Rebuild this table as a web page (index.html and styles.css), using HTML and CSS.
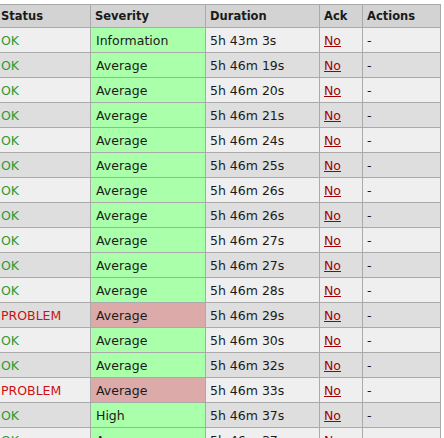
FILE: index.html
```html
<!DOCTYPE html>
<html>
<head>
<meta charset="utf-8">
<link rel="stylesheet" href="styles.css">
</head>
<body>
<div class="events">
  <div class="hd">Status</div><div class="hd">Severity</div><div class="hd">Duration</div><div class="hd">Ack</div><div class="hd">Actions</div>

  <div class="c odd ok">OK</div><div class="c sev-ok">Information</div><div class="c odd">5h 43m 3s</div><div class="c odd"><a class="ack">No</a></div><div class="c odd">-</div>
  <div class="c even ok">OK</div><div class="c sev-ok">Average</div><div class="c even">5h 46m 19s</div><div class="c even"><a class="ack">No</a></div><div class="c even">-</div>
  <div class="c odd ok">OK</div><div class="c sev-ok">Average</div><div class="c odd">5h 46m 20s</div><div class="c odd"><a class="ack">No</a></div><div class="c odd">-</div>
  <div class="c even ok">OK</div><div class="c sev-ok">Average</div><div class="c even">5h 46m 21s</div><div class="c even"><a class="ack">No</a></div><div class="c even">-</div>
  <div class="c odd ok">OK</div><div class="c sev-ok">Average</div><div class="c odd">5h 46m 24s</div><div class="c odd"><a class="ack">No</a></div><div class="c odd">-</div>
  <div class="c even ok">OK</div><div class="c sev-ok">Average</div><div class="c even">5h 46m 25s</div><div class="c even"><a class="ack">No</a></div><div class="c even">-</div>
  <div class="c odd ok">OK</div><div class="c sev-ok">Average</div><div class="c odd">5h 46m 26s</div><div class="c odd"><a class="ack">No</a></div><div class="c odd">-</div>
  <div class="c even ok">OK</div><div class="c sev-ok">Average</div><div class="c even">5h 46m 26s</div><div class="c even"><a class="ack">No</a></div><div class="c even">-</div>
  <div class="c odd ok">OK</div><div class="c sev-ok">Average</div><div class="c odd">5h 46m 27s</div><div class="c odd"><a class="ack">No</a></div><div class="c odd">-</div>
  <div class="c even ok">OK</div><div class="c sev-ok">Average</div><div class="c even">5h 46m 27s</div><div class="c even"><a class="ack">No</a></div><div class="c even">-</div>
  <div class="c odd ok">OK</div><div class="c sev-ok">Average</div><div class="c odd">5h 46m 28s</div><div class="c odd"><a class="ack">No</a></div><div class="c odd">-</div>
  <div class="c even problem">PROBLEM</div><div class="c sev-problem">Average</div><div class="c even">5h 46m 29s</div><div class="c even"><a class="ack">No</a></div><div class="c even">-</div>
  <div class="c odd ok">OK</div><div class="c sev-ok">Average</div><div class="c odd">5h 46m 30s</div><div class="c odd"><a class="ack">No</a></div><div class="c odd">-</div>
  <div class="c even ok">OK</div><div class="c sev-ok">Average</div><div class="c even">5h 46m 32s</div><div class="c even"><a class="ack">No</a></div><div class="c even">-</div>
  <div class="c odd problem">PROBLEM</div><div class="c sev-problem">Average</div><div class="c odd">5h 46m 33s</div><div class="c odd"><a class="ack">No</a></div><div class="c odd">-</div>
  <div class="c even ok">OK</div><div class="c sev-ok">High</div><div class="c even">5h 46m 37s</div><div class="c even"><a class="ack">No</a></div><div class="c even">-</div>
  <div class="c odd ok">OK</div><div class="c sev-ok">Average</div><div class="c odd">5h 46m 37s</div><div class="c odd"><a class="ack">No</a></div><div class="c odd">-</div>
</div>
</body>
</html>
```

FILE: styles.css
```css
html, body {
  margin: 0;
  padding: 0;
  background: #ffffff;
  overflow: hidden;
}
body {
  padding-top: 4px;
  font-family: "DejaVu Sans", Verdana, sans-serif;
  color: #1a1a1a;
}
.events {
  display: grid;
  grid-template-columns: 90px 114px 113px 42px 77px;
  grid-auto-rows: 24px;
  grid-template-rows: 22px;
  gap: 1px;
  background: #aaaaaa;
  padding: 1px 1px 1px 0;
  box-sizing: border-box;
  width: 441px;
}
.hd {
  background: #d3d3d3;
  font-weight: bold;
  font-size: 11.5px;
  display: flex;
  align-items: center;
  padding-left: 4px;
  color: #1a1a1a;
}
.hd:first-child { padding-left: 1px; }
.c {
  font-size: 12.5px;
  display: flex;
  align-items: center;
  padding-left: 4px;
  padding-top: 1px;
  white-space: nowrap;
  overflow: hidden;
}
.odd { background: #efefef; }
.even { background: #dedede; }
.ok, .problem { padding-left: 1px; }
.ok { color: #2f9a2f; }
.problem { color: #cc1111; }
.sev-ok { background: #aaffaa; padding-left: 5px; }
.sev-problem { background: #ddaaaa; padding-left: 5px; }
.ack {
  color: #a00000;
  text-decoration: underline;
}
```
